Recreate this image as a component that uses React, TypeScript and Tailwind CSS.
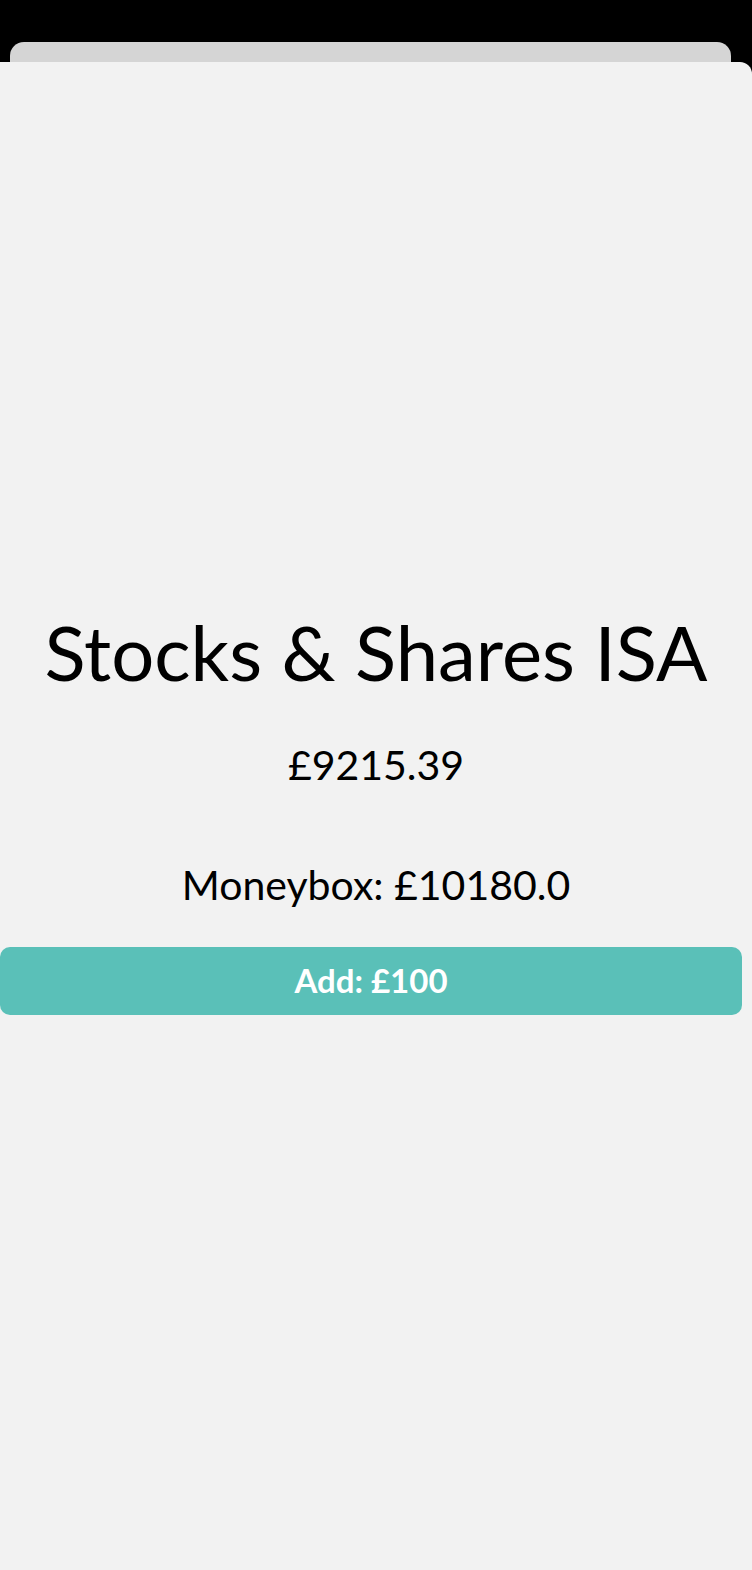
import React from 'react';

export default function App() {
  return (
    <div className="flex h-[1570px] w-[752px] flex-col bg-black" style={{ fontFamily: 'Lato, "Open Sans", sans-serif' }}>
      {/* status bar gap */}
      <div className="h-[42px] shrink-0" />

      {/* card behind the sheet */}
      <div className="mx-[10px] mr-[21px] h-[20px] shrink-0 rounded-t-[14px] bg-[#d5d5d5]" />

      {/* sheet */}
      <div className="flex flex-1 flex-col items-center justify-center rounded-tr-[12px] bg-[#f2f2f2] pb-[4px]">
        <h1 className="text-[76px] leading-none text-black">Stocks &amp; Shares ISA</h1>
        <p className="mt-[54px] text-[41px] leading-none text-black">£9215.39</p>
        <p className="mt-[79px] text-[41px] leading-none text-black">Moneybox: £10180.0</p>
        <button className="mt-[42px] mr-[10px] flex h-[68px] w-[742px] items-center justify-center self-start rounded-[10px] bg-[#5ac0b8] text-[33px] font-bold text-white">
          Add: £100
        </button>
      </div>
    </div>
  );
}
